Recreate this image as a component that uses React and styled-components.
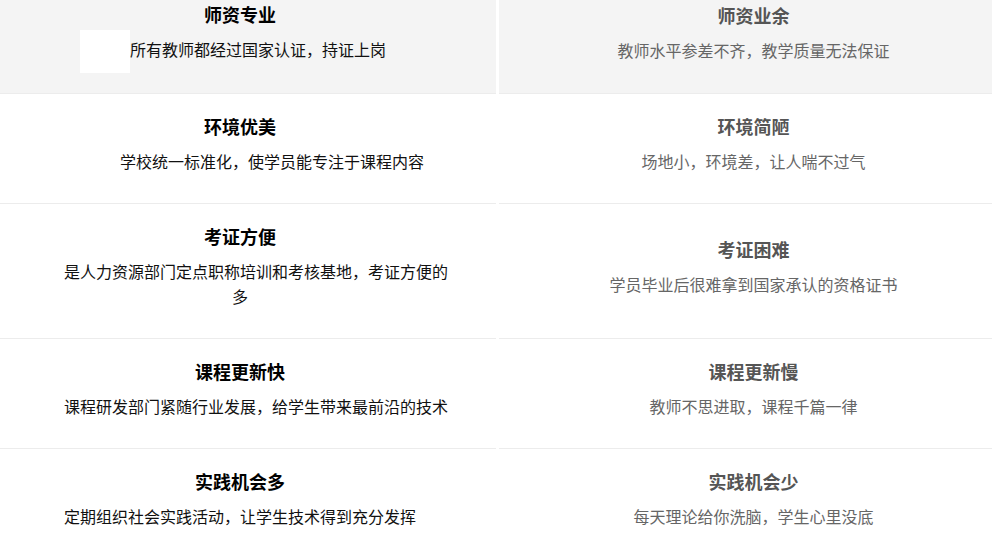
import React from 'react';
import styled, { createGlobalStyle } from 'styled-components';

const GlobalStyle = createGlobalStyle`
    html, body {
        margin: 0;
        padding: 0;
        background: #fff;
        overflow: hidden;
    }
    body {
        font-family: "Noto Sans CJK SC", "Noto Sans", sans-serif;
    }
`;

const rows = [
    {
        good: { title: '师资专业', desc: '所有教师都经过国家认证，持证上岗', indent: -14, badge: true },
        bad: { title: '师资业余', desc: '教师水平参差不齐，教学质量无法保证' },
        shaded: true,
    },
    {
        good: { title: '环境优美', desc: '学校统一标准化，使学员能专注于课程内容', indent: 64 },
        bad: { title: '环境简陋', desc: '场地小，环境差，让人喘不过气' },
    },
    {
        good: { title: '考证方便', desc: '是人力资源部门定点职称培训和考核基地，考证方便的多', indent: 32 },
        bad: { title: '考证困难', desc: '学员毕业后很难拿到国家承认的资格证书' },
    },
    {
        good: { title: '课程更新快', desc: '课程研发部门紧随行业发展，给学生带来最前沿的技术', indent: 32 },
        bad: { title: '课程更新慢', desc: '教师不思进取，课程千篇一律' },
    },
    {
        good: { title: '实践机会多', desc: '定期组织社会实践活动，让学生技术得到充分发挥', indent: 0 },
        bad: { title: '实践机会少', desc: '每天理论给你洗脑，学生心里没底' },
    },
];

// page is scrolled a little, first row sits partly above the fold
const Page = styled.div`
    margin-top: -18px;
    width: 992px;
`;

const Table = styled.div`
    display: grid;
    grid-template-columns: 496px 1fr;
    column-gap: 3px;
`;

const Cell = styled.div`
    display: flex;
    flex-direction: column;
    justify-content: center;
    align-items: center;
    padding: ${({ $side }) => ($side === 'left' ? '17px 16px 29px 0' : '17px 0 29px 16px')};
    background: ${({ $shaded }) => ($shaded ? '#f4f4f4' : '#fff')};
    border-bottom: 1px solid #ececec;
    text-align: center;
`;

const Title = styled.div`
    font-size: 18px;
    font-weight: 700;
    line-height: 30px;
    margin-bottom: 8px;
    color: ${({ $muted }) => ($muted ? '#555' : '#000')};
`;

const Desc = styled.div`
    width: 418px;
    font-size: 16px;
    line-height: 25px;
    text-indent: ${({ $indent }) => $indent || 0}px;
    color: ${({ $muted }) => ($muted ? '#666' : '#111')};
`;

const Badge = styled.span`
    display: inline-block;
    width: 50px;
    height: 43px;
    margin: -9px 0 -9px;
    vertical-align: middle;
    background: #fff;
`;

const App = () => {
    return (
        <Page>
            <GlobalStyle />
            <Table>
                {rows.map((row, index) => (
                    <React.Fragment key={index}>
                        <Cell $side="left" $shaded={row.shaded}>
                            <Title>{row.good.title}</Title>
                            <Desc $indent={row.good.indent}>
                                {row.good.badge && <Badge />}
                                {row.good.desc}
                            </Desc>
                        </Cell>
                        <Cell $side="right" $shaded={row.shaded}>
                            <Title $muted>{row.bad.title}</Title>
                            <Desc $muted>{row.bad.desc}</Desc>
                        </Cell>
                    </React.Fragment>
                ))}
            </Table>
        </Page>
    );
};

export default App;
